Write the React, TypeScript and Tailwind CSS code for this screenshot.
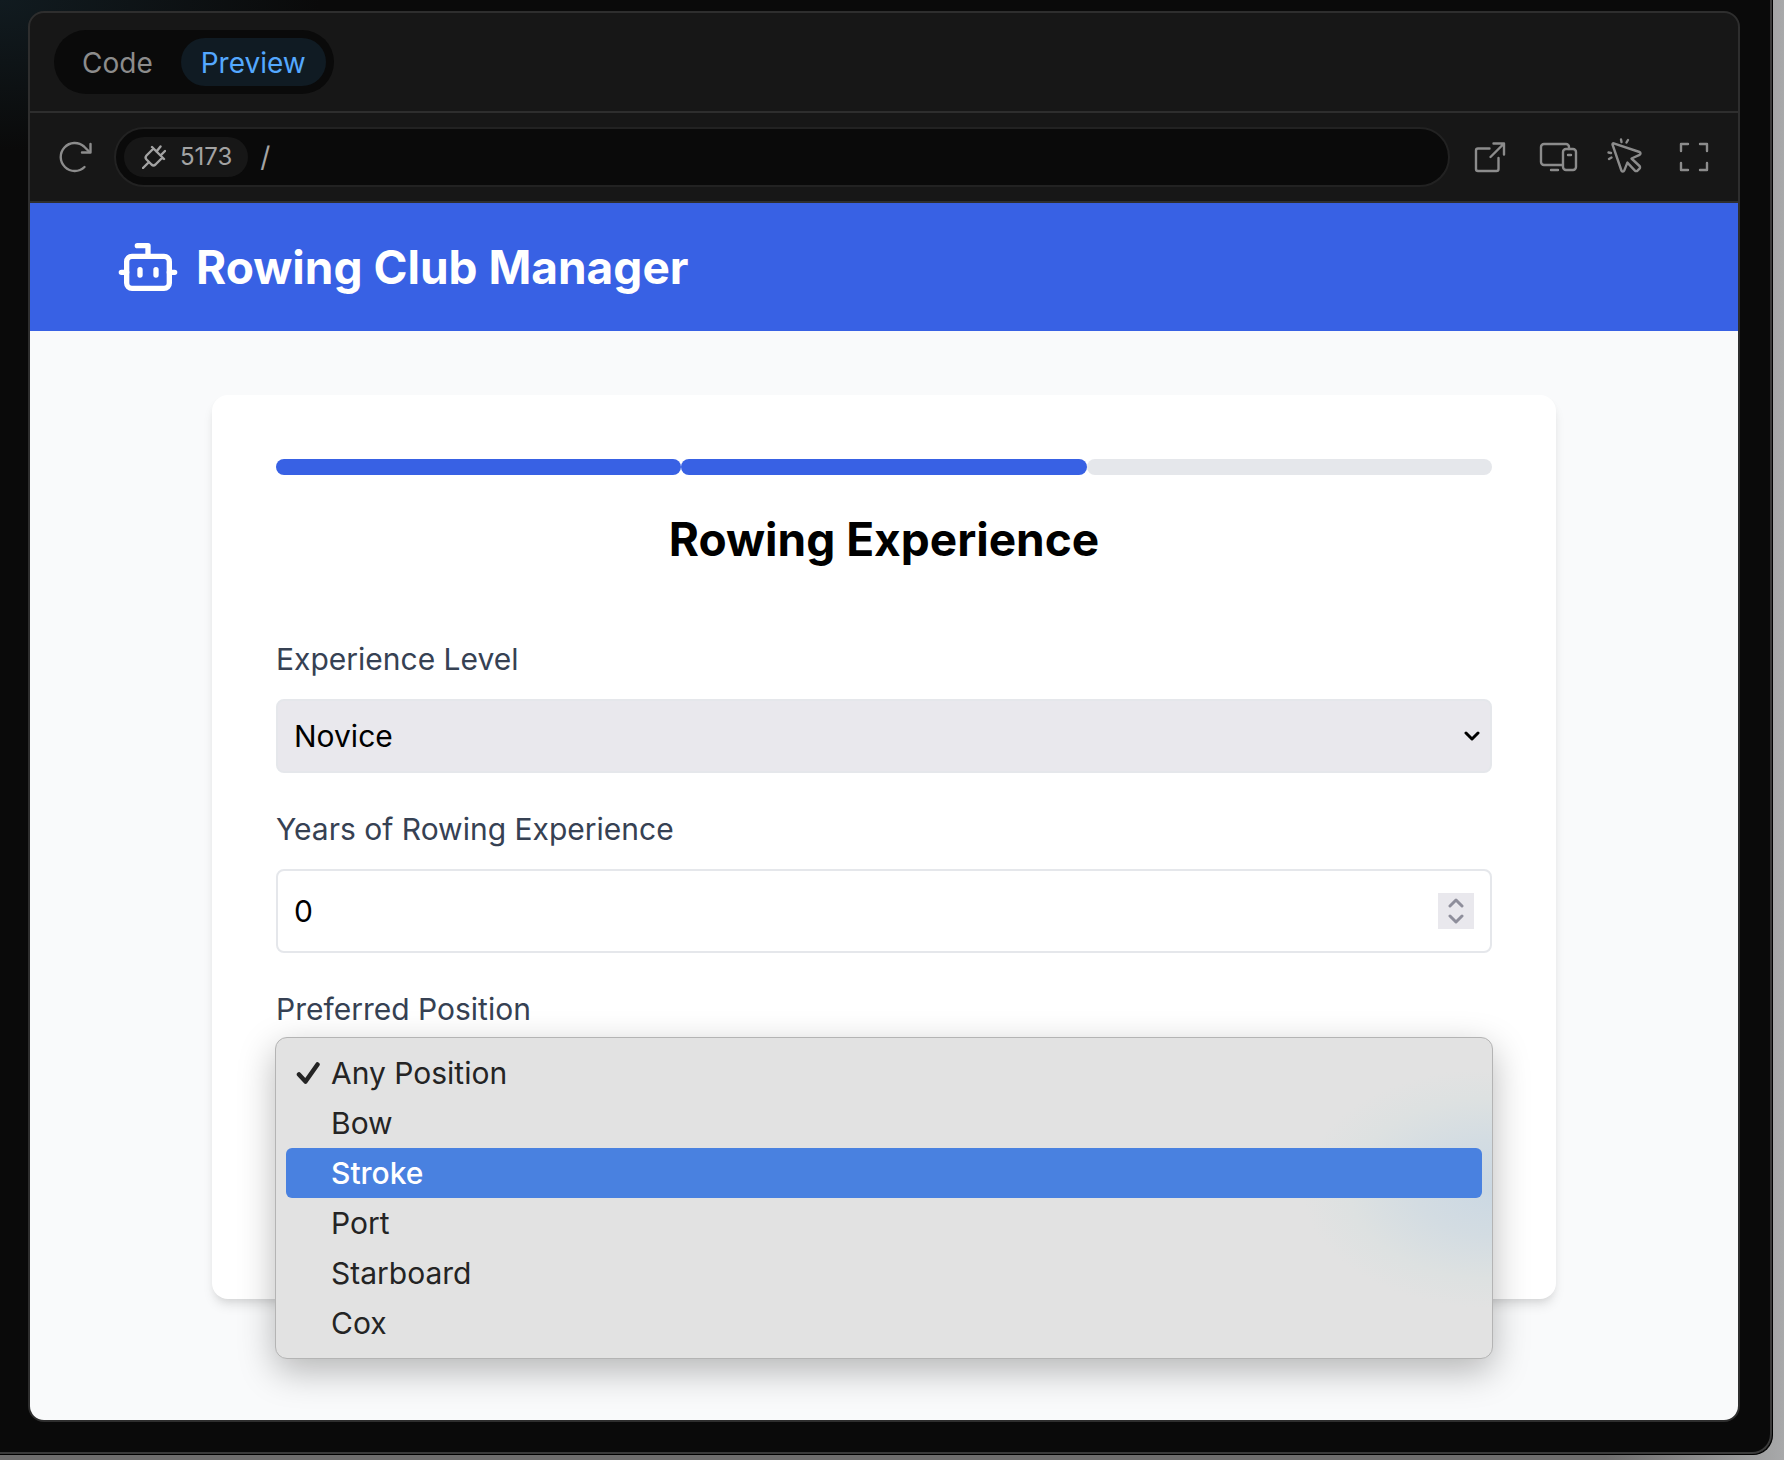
import React from "react";

type IconProps = { className?: string; children: React.ReactNode; viewBox: string };

function Icon({ className, children, viewBox }: IconProps) {
  return (
    <svg className={className} viewBox={viewBox} fill="none" stroke="currentColor" strokeWidth={2.4} strokeLinecap="round" strokeLinejoin="round" aria-hidden="true">
      {children}
    </svg>
  );
}

function Chevron({ className, up = false }: { className?: string; up?: boolean }) {
  return (
    <svg className={className} viewBox="0 0 16 10" fill="none" stroke="currentColor" strokeWidth={3} strokeLinecap="round" strokeLinejoin="round" aria-hidden="true">
      <path d={up ? "M2 8 8 2l6 6" : "M2 2l6 6 6-6"} />
    </svg>
  );
}

const positions = ["Any Position", "Bow", "Stroke", "Port", "Starboard", "Cox"];

function PanelTabs() {
  return (
    <div className="flex h-[100px] items-center border-b-2 border-[#2e2e2e] px-6">
      <div className="flex h-16 items-center rounded-full bg-[#0a0a0a] p-2 text-[28px] leading-8" role="tablist">
        <button role="tab" aria-selected="false" className="h-12 rounded-full px-5 pt-0.5 text-[#8c8c8c]">Code</button>
        <button role="tab" aria-selected="true" className="ml-2 h-12 rounded-full bg-[#101b23] px-5 pt-0.5 text-[#54a8ff]">Preview</button>
      </div>
    </div>
  );
}

function Toolbar() {
  return (
    <div className="flex h-[90px] items-center border-b-2 border-[#2e2e2e] px-6 text-[#8c8c8c]">
      <button aria-label="Reload" className="p-1">
        <Icon className="h-9 w-9" viewBox="0 0 36 36">
          <path d="M26.5 28A14 14 0 1 1 26 7.5L31.5 13" />
          <path d="M32.5 5v8.5H24" />
        </Icon>
      </button>
      <div className="ml-4 flex h-[60px] min-w-0 flex-1 items-center rounded-full border-2 border-[#222222] bg-[#0a0a0a] pl-2">
        <button className="flex h-10 items-center gap-3.5 rounded-full bg-[#171717] pr-4 pl-[18px] text-2xl text-[#a3a3a3]">
          <Icon className="h-6 w-6" viewBox="0 0 24 24">
            <path d="M1 23l5.5-5.5M10 2l12 12M14.5 6.5 18.5 1.5M18.5 10.5 23 6M11.5 3.5 4.5 10.5a3 3 0 0 0 0 4l5 5a3 3 0 0 0 4 0l7-7" />
          </Icon>
          5173
        </button>
        <input aria-label="Path" defaultValue="/" className="ml-3 min-w-0 flex-1 bg-transparent text-[28px] text-[#a3a3a3] outline-none" />
      </div>
      <div className="ml-5 flex items-center gap-6">
        <button aria-label="Open in new tab">
          <Icon className="h-10 w-10" viewBox="0 0 40 40">
            <path d="M19.5 11.500H8a2 2 0 0 0-2 2V32a2 2 0 0 0 2 2h18.500a2 2 0 0 0 2-2V21" />
            <path d="M23.5 6.500H34V17.500M34 6.500 20.500 20" />
          </Icon>
        </button>
        <button aria-label="Device size">
          <Icon className="h-10 w-12" viewBox="0 0 48 40">
            <path d="M28 28H10a3 3 0 0 1-3-3V10a3 3 0 0 1 3-3h22a3 3 0 0 1 3 3v2" />
            <rect x="29" y="12" width="13" height="21" rx="3" />
            <path d="M34 18h3M17 33h7" />
          </Icon>
        </button>
        <button aria-label="Select element">
          <Icon className="h-10 w-10" viewBox="0 0 40 40">
            <path d="M6.500 7.500a1 1 0 0 1 1.200-1.200L33.500 15a1.500 1.500 0 0 1 .1 2.800L25.500 21.500l8 7.500a1.800 1.800 0 0 1 0 2.600l-2 2a1.800 1.800 0 0 1-2.600 0l-7.500-8-3.200 8a1.500 1.500 0 0 1-2.800-.1z" />
            <path d="M15.500 5 15 2.500M20.500 5.500 22 3M5 16 2.500 15.500M5.500 20.500 3 22" />
          </Icon>
        </button>
        <button aria-label="Full screen" className="ml-1">
          <Icon className="h-10 w-10" viewBox="0 0 40 40">
            <path d="M7 14V7h7M26 7h7v7M33 26v7h-7M14 33H7v-7" />
          </Icon>
        </button>
      </div>
    </div>
  );
}

function PositionMenu() {
  return (
    <ul role="listbox" aria-labelledby="position-label" className="absolute inset-x-[-1px] -top-3 rounded-xl border border-[#b4b4b4] bg-[#e2e2e2] bg-[radial-gradient(ellipse_190px_120px_at_100%_47%,#cbd8e3_0%,#d3dce2_40%,#dde1e1_75%,#e2e2e2_100%)] p-2.5 shadow-[0_12px_36px_rgba(0,0,0,0.28)]">
      {positions.map((name) => (
        <li
          key={name}
          role="option"
          aria-selected={name === "Any Position"}
          className={
            name === "Stroke"
              ? "flex h-[50px] items-center rounded-md bg-[#4981e0] pl-[10px] font-medium text-white"
              : "flex h-[50px] items-center rounded-md pl-[10px] text-[#242424]"
          }
        >
          <span className="flex w-[35px] shrink-0">
            {name === "Any Position" && (
              <svg className="h-6 w-6" viewBox="0 0 24 24" fill="none" stroke="currentColor" strokeWidth={4.5} strokeLinecap="round" strokeLinejoin="round" aria-hidden="true">
                <path d="M3 13.500l6.500 7L21.500 3.500" />
              </svg>
            )}
          </span>
          {name}
        </li>
      ))}
    </ul>
  );
}

function ExperienceForm() {
  return (
    <form className="mx-auto w-full max-w-[1344px] rounded-2xl bg-white p-16 shadow-[0_8px_12px_-2px_rgba(0,0,0,0.1),0_4px_8px_-4px_rgba(0,0,0,0.1)]">
      <div className="flex">
        <div className="h-4 flex-1 rounded-full bg-[#3861e4]" />
        <div className="h-4 flex-1 rounded-full bg-[#3861e4]" />
        <div className="h-4 flex-1 rounded-full bg-gray-200" />
      </div>
      <h2 className="mt-8 text-center text-[46px] leading-[64px] font-bold text-black">Rowing Experience</h2>

      <div className="mt-16 flex flex-col gap-4">
        <label htmlFor="level" className="text-[30px] leading-[48px] text-gray-700">Experience Level</label>
        <div className="relative">
          <select id="level" className="block h-[74px] w-full appearance-none rounded-lg border-2 border-gray-200 bg-[#e9e8ed] px-4 text-[30px] text-black">
            <option>Novice</option>
          </select>
          <Chevron className="pointer-events-none absolute top-8 right-3 h-[10px] w-4 text-black" />
        </div>
      </div>

      <div className="mt-8 flex flex-col gap-4">
        <label htmlFor="years" className="text-[30px] leading-[48px] text-gray-700">Years of Rowing Experience</label>
        <div className="flex h-[84px] items-center rounded-lg border-2 border-gray-200 px-4">
          <input id="years" inputMode="numeric" defaultValue="0" className="min-w-0 flex-1 text-[30px] text-black outline-none" />
          <div className="flex h-9 w-9 flex-col items-center justify-center gap-1.5 bg-[#e9e8ed] text-[#8e8e9b]">
            <button type="button" aria-label="Increase"><Chevron up className="block h-[10px] w-4" /></button>
            <button type="button" aria-label="Decrease"><Chevron className="block h-[10px] w-4" /></button>
          </div>
        </div>
      </div>

      <div className="mt-8 mb-28 flex flex-col gap-4">
        <label id="position-label" htmlFor="position" className="text-[30px] leading-[48px] text-gray-700">Preferred Position</label>
        <div className="relative text-[30px]">
          <select id="position" className="block h-[74px] w-full appearance-none rounded-lg border-2 border-gray-200 bg-[#e9e8ed] px-4 text-black">
            {positions.map((name) => (
              <option key={name}>{name}</option>
            ))}
          </select>
          <PositionMenu />
        </div>
      </div>
    </form>
  );
}

export default function App() {
  return (
    <div className="flex min-h-screen flex-col bg-linear-to-r from-[#6e6d6d] from-90% to-[#a8a9aa] pr-[11px] pb-[5px] font-['Inter',sans-serif]">
      <div className="flex flex-1 flex-col rounded-br-[20px] border-r border-b border-black bg-black">
        <div className="flex flex-1 flex-col rounded-br-[20px] border-r-2 border-b-2 border-[#3a3a3a] bg-[#0a0a0a] bg-[radial-gradient(ellipse_320px_150px_at_0_0,#111b20_0%,#0a0a0a_100%)] pt-[11px] pr-[30px] pb-[30px] pl-7">
          <div className="flex flex-1 flex-col overflow-hidden rounded-2xl border-2 border-[#2e2e2e] bg-[#171717]">
            <PanelTabs />
            <Toolbar />
            <div className="flex flex-1 flex-col bg-gray-50">
              <header className="bg-[#3861e4] py-8">
                <div className="mx-auto flex max-w-[1536px] items-center gap-4 text-white">
                  <svg className="h-16 w-16" viewBox="0 0 24 24" fill="none" stroke="currentColor" strokeWidth={2} strokeLinecap="round" strokeLinejoin="round" aria-hidden="true">
                    <path d="M12 8V4H8" />
                    <rect width="16" height="12" x="4" y="8" rx="2" />
                    <path d="M2 14h2M20 14h2M15 13v2M9 13v2" />
                  </svg>
                  <h1 className="text-[46px] leading-[64px] font-bold">Rowing Club Manager</h1>
                </div>
              </header>
              <main className="flex-1 px-8 pt-16">
                <ExperienceForm />
              </main>
            </div>
          </div>
        </div>
      </div>
    </div>
  );
}
